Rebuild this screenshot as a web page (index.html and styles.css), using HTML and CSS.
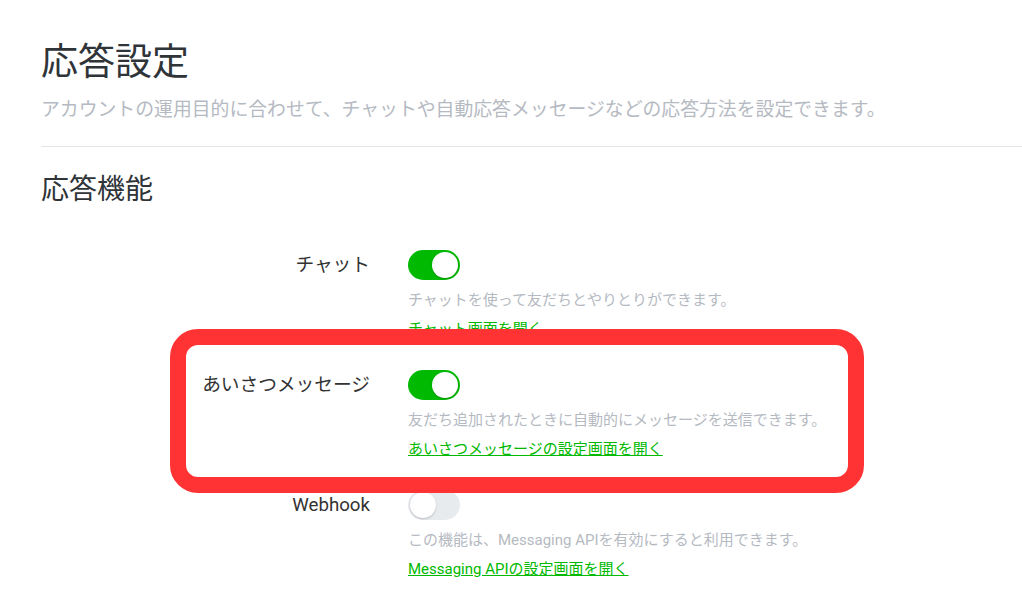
FILE: index.html
```html
<!DOCTYPE html>
<html lang="ja">

<head>
    <meta charset="UTF-8">
    <title>応答設定</title>
    <link rel="stylesheet" href="styles.css">
</head>

<body>
    <main class="page">
        <!-- ページ見出し -->
        <header class="page-head">
            <h1 class="page-title">応答設定</h1>
            <p class="page-lead">アカウントの運用目的に合わせて、チャットや自動応答メッセージなどの応答方法を設定できます。</p>
        </header>

        <!-- 応答機能 -->
        <section class="settings">
            <h2 class="settings-title">応答機能</h2>

            <div class="setting-row">
                <div class="setting-label">チャット</div>
                <div class="setting-body">
                    <span class="toggle is-on"><span class="toggle-knob"></span></span>
                    <p class="setting-desc">チャットを使って友だちとやりとりができます。</p>
                    <a class="setting-link" href="#">チャット画面を開く</a>
                </div>
            </div>

            <div class="setting-row">
                <div class="setting-label">あいさつメッセージ</div>
                <div class="setting-body">
                    <span class="toggle is-on"><span class="toggle-knob"></span></span>
                    <p class="setting-desc">友だち追加されたときに自動的にメッセージを送信できます。</p>
                    <a class="setting-link" href="#">あいさつメッセージの設定画面を開く</a>
                </div>
            </div>

            <div class="setting-row">
                <div class="setting-label">Webhook</div>
                <div class="setting-body">
                    <span class="toggle"><span class="toggle-knob"></span></span>
                    <p class="setting-desc">この機能は、Messaging APIを有効にすると利用できます。</p>
                    <a class="setting-link" href="#">Messaging APIの設定画面を開く</a>
                </div>
            </div>
        </section>

        <!-- 強調枠 -->
        <div class="highlight"></div>
    </main>
</body>

</html>
```

FILE: styles.css
```css
/* 全体 */
body {
    margin: 0;
    background: #fff;
    font-family: Roboto, "Noto Sans CJK JP", sans-serif;
    color: #2f3439;
}

.page {
    position: relative;
    padding: 38px 0 0 41px;
    overflow: hidden;
    height: 600px;
    box-sizing: border-box;
}

/* ページ見出し */
.page-head {
    border-bottom: 1px solid #e4e4e4;
    padding-bottom: 23px;
}

.page-title {
    margin: 0;
    font-size: 37px;
    font-weight: 400;
    line-height: 50px;
}

.page-lead {
    margin: 9px 0 0;
    font-size: 18.85px;
    line-height: 26px;
    color: #b5bac2;
}

/* 応答機能 */
.settings-title {
    margin: 25px 0 42px;
    font-size: 28px;
    font-weight: 400;
    line-height: 36px;
}

.setting-row {
    display: flex;
    gap: 38px;
    margin-bottom: 31px;
}

.setting-label {
    width: 329px;
    text-align: right;
    font-size: 18.7px;
    line-height: 30px;
    color: #333;
}

.setting-body {
    display: flex;
    flex-direction: column;
    align-items: flex-start;
}

.setting-desc {
    margin: 10px 0 9px;
    font-size: 15px;
    line-height: 20px;
    color: #b5bac2;
}

.setting-link {
    font-size: 15px;
    line-height: 20px;
    color: #00b900;
    text-decoration: underline;
}

/* トグル */
.toggle {
    display: flex;
    justify-content: flex-start;
    align-items: center;
    width: 52px;
    height: 30px;
    padding: 2px;
    box-sizing: border-box;
    border-radius: 15px;
    background: #e8ebee;
}

.toggle.is-on {
    justify-content: flex-end;
    background: #00b900;
}

.toggle-knob {
    width: 26px;
    height: 26px;
    border-radius: 50%;
    background: #fff;
    box-shadow: 0 1px 2px rgba(0, 0, 0, 0.2);
}

/* 赤い強調枠 */
.highlight {
    position: absolute;
    left: 170px;
    top: 329px;
    width: 694px;
    height: 164px;
    box-sizing: border-box;
    border: 16px solid #ff3333;
    border-radius: 28px;
}
```
